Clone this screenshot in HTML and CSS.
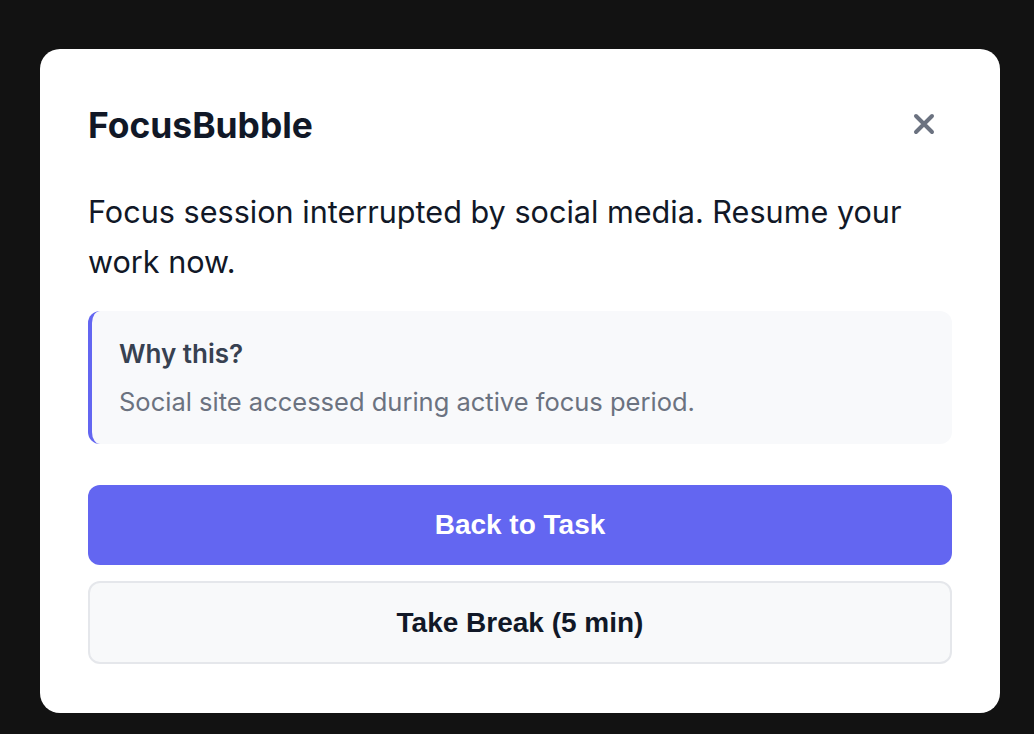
FILE: index.html
```html
<!DOCTYPE html>
<html lang="en">
<head>
<meta charset="utf-8">
<title>FocusBubble</title>
<link rel="stylesheet" href="styles.css">
</head>
<body>
  <div class="page">
    <div class="card">
      <div class="header">
        <h1 class="title">FocusBubble</h1>
        <button class="close" aria-label="Close">
          <svg width="22" height="22" viewBox="0 0 22 22"><path d="M3 3 L19 19 M19 3 L3 19" stroke="#6b7280" stroke-width="4" stroke-linecap="round" fill="none"/></svg>
        </button>
      </div>
      <p class="message">Focus session interrupted by social media. Resume your work now.</p>
      <div class="why">
        <div class="why-title">Why this?</div>
        <div class="why-desc">Social site accessed during active focus period.</div>
      </div>
      <div class="actions">
        <button class="btn btn-primary">Back to Task</button>
        <button class="btn btn-secondary">Take Break (5 min)</button>
      </div>
    </div>
  </div>
</body>
</html>
```
FILE: styles.css
```css
html, body {
  margin: 0;
  padding: 0;
  background: #121212;
}
body {
  font-family: Inter, "Noto Sans", sans-serif;
  width: 1034px;
  height: 734px;
  overflow: hidden;
}
.page {
  padding: 49px 0 0 40px;
}
.card {
  width: 960px;
  height: 664px;
  box-sizing: border-box;
  background: #ffffff;
  border-radius: 20px;
  padding: 48px;
  display: flex;
  flex-direction: column;
}
.header {
  height: 56px;
  display: flex;
  align-items: center;
  justify-content: space-between;
  margin-bottom: 34px;
}
.title {
  margin: 2px 0 0;
  font-size: 35.4px;
  font-weight: 700;
  color: #111827;
  line-height: 40px;
}
.close {
  border: none;
  background: transparent;
  padding: 0;
  width: 22px;
  height: 22px;
  margin-right: 17px;
  margin-top: -2px;
  display: flex;
  align-items: center;
  justify-content: center;
  cursor: pointer;
}
.message {
  margin: 0 0 24px;
  font-size: 30.6px;
  line-height: 50px;
  color: #111827;
}
.why {
  background: #f8f9fb;
  border-left: 4px solid #6366f1;
  border-radius: 12px;
  padding: 26px 28px 25px 27px;
}
.why-title {
  font-size: 26px;
  font-weight: 600;
  line-height: 34px;
  color: #374151;
  margin-bottom: 14px;
}
.why-desc {
  font-size: 25.5px;
  line-height: 34px;
  color: #6b7280;
}
.actions {
  margin-top: 41px;
  display: flex;
  flex-direction: column;
  gap: 16px;
}
.btn {
  font-family: "Liberation Sans", Arial, sans-serif;
  font-weight: 700;
  font-size: 28px;
  border-radius: 12px;
  width: 100%;
  cursor: pointer;
}
.btn-primary {
  height: 80px;
  background: #6366f1;
  color: #ffffff;
  border: none;
}
.btn-secondary {
  height: 83px;
  background: #f8f9fa;
  color: #111827;
  border: 2px solid #e5e7eb;
}
```
